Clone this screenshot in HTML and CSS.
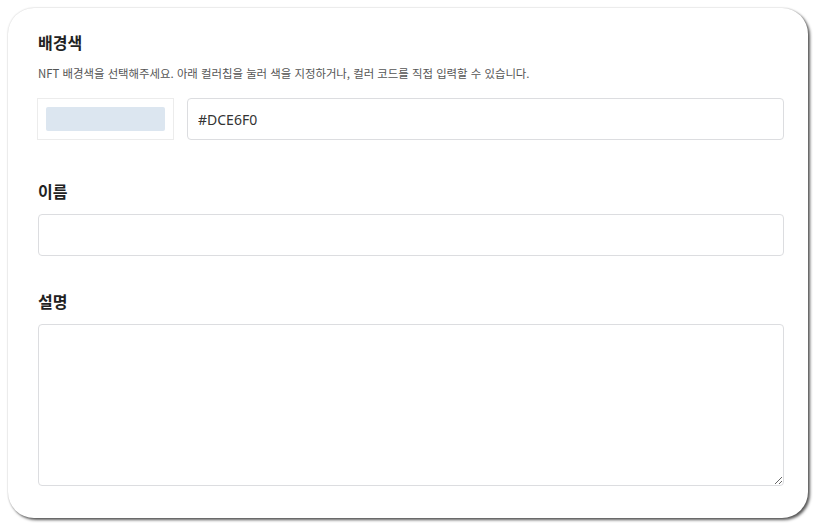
FILE: index.html
```html
<!DOCTYPE html>
<html lang="ko">
<head>
  <meta charset="UTF-8">
  <title>NFT 설정</title>
  <link rel="stylesheet" href="styles.css">
</head>
<body>
  <div class="card">
    <div class="field field-bg">
      <h2>배경색</h2>
      <p class="desc">NFT 배경색을 선택해주세요. 아래 컬러칩을 눌러 색을 지정하거나, 컬러 코드를 직접 입력할 수 있습니다.</p>
      <div class="color-row">
        <div class="chip-box"><div class="chip"></div></div>
        <input class="input" type="text" value="#DCE6F0">
      </div>
    </div>
    <div class="field">
      <h2>이름</h2>
      <input class="input" type="text">
    </div>
    <div class="field">
      <h2>설명</h2>
      <textarea class="textarea"></textarea>
    </div>
  </div>
</body>
</html>
```

FILE: styles.css
```css
body {
  margin: 0;
  background: #fff;
  font-family: "Noto Sans CJK KR", "Noto Sans", sans-serif;
  color: #222;
}
.card {
  margin: 8px;
  width: 746px;
  height: 488px;
  padding: 22px 24px 0 30px;
  background: #fff;
  border-radius: 26px;
  box-shadow: 2px 2px 3px rgba(0, 0, 0, 0.65), 0 0 2px rgba(0, 0, 0, 0.2);
}
.field {
  margin-bottom: 33px;
}
.field-bg {
  margin-bottom: 39px;
}
.field h2 {
  margin: 0 0 11px;
  font-size: 16px;
  font-weight: 700;
  line-height: 24px;
  color: #222;
}
.desc {
  margin: 0 0 17px;
  font-size: 11.4px;
  line-height: 16px;
  color: #555;
}
.color-row {
  display: flex;
  gap: 13px;
  margin-left: -1px;
}
.chip-box {
  width: 137px;
  height: 42px;
  box-sizing: border-box;
  border: 1px solid #ececec;
  padding: 8px;
  flex: none;
}
.chip {
  height: 24px;
  background: #DCE6F0;
  border-radius: 2px;
}
.input {
  display: block;
  width: 100%;
  height: 42px;
  box-sizing: border-box;
  border: 1px solid #dcdde0;
  border-radius: 4px;
  padding: 0 10px;
  font-family: "Noto Sans", "Noto Sans CJK KR", sans-serif;
  font-size: 14px;
  color: #333;
  outline: none;
}
.textarea {
  display: block;
  width: 100%;
  height: 162px;
  box-sizing: border-box;
  border: 1px solid #dcdde0;
  border-radius: 4px;
  font-family: inherit;
  outline: none;
}
```
